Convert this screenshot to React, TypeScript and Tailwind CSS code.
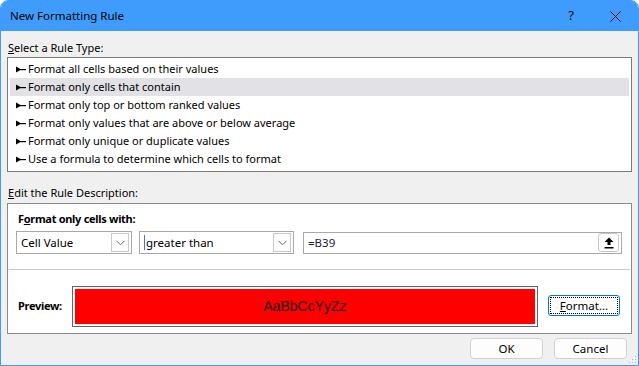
import { ReactNode } from "react";

const ruleTypes = [
  "Format all cells based on their values",
  "Format only cells that contain",
  "Format only top or bottom ranked values",
  "Format only values that are above or below average",
  "Format only unique or duplicate values",
  "Use a formula to determine which cells to format",
];

function Bullet() {
  return (
    <svg width="10" height="7" viewBox="0 0 10 7" className="shrink-0">
      <polygon points="0,0.5 0,6.5 4.5,4 4.5,3" fill="#000" />
      <rect x="4" y="3" width="6" height="1.2" fill="#000" />
    </svg>
  );
}

function Chevron() {
  return (
    <svg width="9" height="6" viewBox="0 0 9 6">
      <polyline points="0.5,0.8 4.5,4.8 8.5,0.8" fill="none" stroke="#6a6a6a" strokeWidth="1" />
    </svg>
  );
}

function Combo({ width, children, cursor }: { width: string; children: ReactNode; cursor?: boolean }) {
  return (
    <div className={`${width} shrink-0 h-[23px] border border-[#a9a9a9] bg-white flex items-center pl-[4px] pr-[2px]`}>
      {cursor && <div className="w-px h-[15px] bg-[#2f7fd8] mr-[1px]" />}
      <span className="flex-1 text-[11.5px] leading-none">{children}</span>
      <div className="w-[18px] h-[19px] border border-[#c8c8c8] bg-[#fcfcfc] flex items-center justify-center">
        <Chevron />
      </div>
    </div>
  );
}

function Button({ children, focused }: { children: ReactNode; focused?: boolean }) {
  if (focused) {
    return (
      <div className="w-[72px] h-[21px] rounded-[3px] border border-[#0078d7] bg-[#fdfdfd] p-[1px]">
        <div className="w-full h-full border border-dotted border-black flex items-center justify-center text-[11.5px] leading-none">
          {children}
        </div>
      </div>
    );
  }
  return (
    <div className="w-[73px] h-[21px] rounded-[4px] border border-[#d0d0d0] bg-[#fdfdfd] flex items-center justify-center text-[11.5px] leading-none">
      {children}
    </div>
  );
}

export default function App() {
  return (
    <div className="w-[639px] h-[366px] rounded-t-[8px] border border-[#3f9cfc] bg-[#f0f0f0] flex flex-col overflow-hidden font-['Noto_Sans',sans-serif] text-black relative">
      {/* title bar */}
      <div className="h-[30px] bg-[#3f9cfc] flex items-center pl-[9px] shrink-0">
        <span className="flex-1 text-[11.5px]">New Formatting Rule</span>
        <span className="text-[13px] w-[14px] mr-[32px] text-center">?</span>
        <svg width="11" height="11" viewBox="0 0 11 11" className="mr-[17px]">
          <path d="M0.5 0.5 L10.5 10.5 M10.5 0.5 L0.5 10.5" stroke="#000" strokeWidth="1" />
        </svg>
      </div>

      <div className="flex flex-col px-[6px]">
        <div className="pt-[9px] text-[11px] leading-[16px] pl-[1px]">
          <span className="underline">S</span>elect a Rule Type:
        </div>

        {/* rule list */}
        <div className="mt-[1px] h-[115px] border border-[#7a7a7a] bg-white px-[2px] pt-[2px]">
          {ruleTypes.map((r, i) => (
            <div
              key={r}
              className={`h-[18px] flex items-center gap-[2px] pl-[6px] pt-[1px] text-[11px] ${i === 1 ? "bg-[#e1e1e6]" : ""}`}
            >
              <Bullet />
              <span>{r}</span>
            </div>
          ))}
        </div>

        <div className="mt-[13px] text-[11px] leading-[16px] pl-[1px]">
          <span className="underline">E</span>dit the Rule Description:
        </div>

        {/* description */}
        <div className="mt-[2px] h-[131px] border border-[#8a8a8a] bg-white flex flex-col">
          <div className="pl-[10px] pt-[7px] text-[11px] leading-[16px] font-bold tracking-[-0.3px]">
            F<span className="underline">o</span>rmat only cells with:
          </div>
          <div className="mt-[4px] flex items-center pl-[8px]">
            <Combo width="w-[116px]">Cell Value</Combo>
            <div className="w-[7px] shrink-0" />
            <Combo width="w-[155px]" cursor>greater than</Combo>
            <div className="w-[9px] shrink-0" />
            <div className="w-[319px] shrink-0 h-[22px] border border-[#a9a9a9] bg-white flex items-center pl-[4px] pr-[2px]">
              <span className="flex-1 text-[11.5px] leading-none text-[#1a1a40]">=B39</span>
              <div className="w-[21px] h-[19px] rounded-[3px] border border-[#c8c8c8] bg-white flex items-center justify-center">
                <svg width="10" height="12" viewBox="0 0 10 12">
                  <path d="M5 0.5 L9.5 5 L6.5 5 L6.5 8 L3.5 8 L3.5 5 L0.5 5 Z" fill="#000" />
                  <rect x="0.5" y="10" width="9" height="1.5" fill="#000" />
                </svg>
              </div>
            </div>
          </div>
          <div className="mt-[15px] mx-[1px] h-px bg-[#c8c8c8]" />
          <div className="flex items-center pl-[10px] pt-[16px]">
            <span className="w-[54px] shrink-0 text-[11px] font-bold tracking-[-0.3px]">Preview:</span>
            <div className="w-[466px] shrink-0 h-[41px] border border-[#646464] bg-white p-[2px]">
              <div className="w-full h-full bg-[#ff0000] flex items-center justify-center font-['Liberation_Sans',Arial,sans-serif] text-[14px] text-[#1a0000]">
                AaBbCcYyZz
              </div>
            </div>
            <div className="ml-[10px] -mt-[2px] shrink-0">
              <Button focused>
                <span className="underline">F</span>ormat...
              </Button>
            </div>
          </div>
        </div>

        {/* bottom buttons */}
        <div className="mt-[4px] flex justify-end gap-[11px] pr-[5px]">
          <Button>OK</Button>
          <Button>Cancel</Button>
        </div>
      </div>

      {/* resize grip */}
      <svg width="8" height="8" viewBox="0 0 8 8" className="absolute right-[1px] bottom-[1px]">
        <rect x="6" y="0" width="1" height="1" fill="#b8b8b8" />
        <rect x="3" y="3" width="1" height="1" fill="#b8b8b8" />
        <rect x="6" y="3" width="1" height="1" fill="#b8b8b8" />
        <rect x="0" y="6" width="1" height="1" fill="#b8b8b8" />
        <rect x="3" y="6" width="1" height="1" fill="#b8b8b8" />
        <rect x="6" y="6" width="1" height="1" fill="#b8b8b8" />
      </svg>
    </div>
  );
}
